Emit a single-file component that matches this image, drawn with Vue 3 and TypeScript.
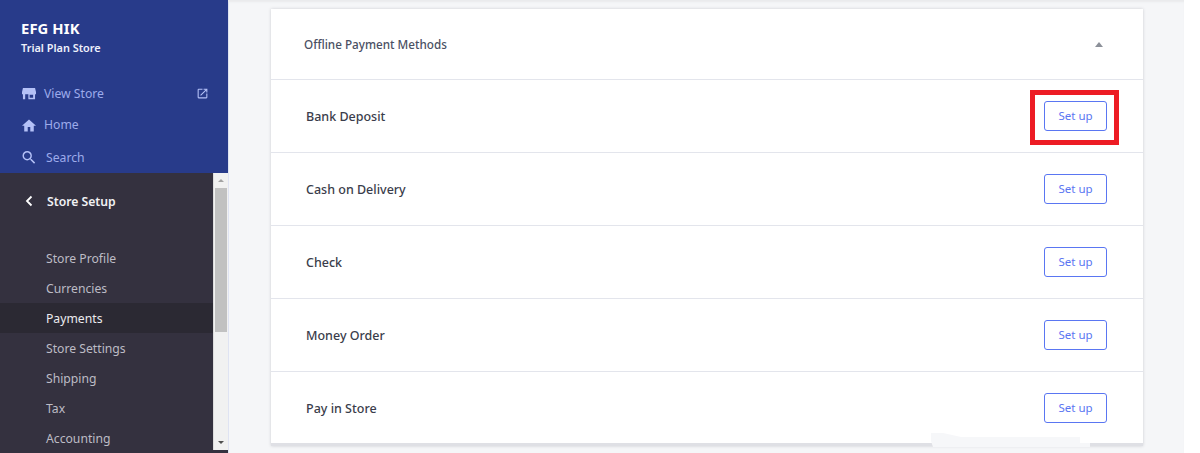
<template>
  <div class="page">
    <aside class="sidebar">
      <div class="brand">
        <div class="store-name">EFG HIK</div>
        <div class="store-plan">Trial Plan Store</div>
      </div>
      <nav class="top-nav">
        <a class="top-link view-store">
          <svg class="icon" viewBox="1 3 22 18"><path d="M2.500 3.500h19l1.500 6v3.500h-1.500v8h-10.500v-8H6v8H2.500v-8H1V9.500z M13 14v4.500h5.500V14z" fill-rule="evenodd" /></svg>
          <span>View Store</span>
          <svg class="external" viewBox="0 0 24 24"><path d="M19 19H5V5h7V3H5a2 2 0 0 0-2 2v14a2 2 0 0 0 2 2h14a2 2 0 0 0 2-2v-7h-2v7zM14 3v2h3.590l-9.830 9.830 1.410 1.410L19 6.410V10h2V3h-7z" /></svg>
        </a>
        <a class="top-link home">
          <svg class="icon" viewBox="1 2 22 19"><path d="M10 21v-7h4v7h5.500v-9H23L12 2 1 12h3.500v9z" /></svg>
          <span>Home</span>
        </a>
        <a class="top-link search">
          <svg class="icon" viewBox="3 3 18 18"><path d="M15.500 14h-.79l-.28-.27A6.470 6.470 0 0 0 16 9.500 6.500 6.500 0 1 0 9.500 16c1.610 0 3.090-.59 4.230-1.570l.27.28v.79l5 4.990L20.490 19l-4.990-5zm-6 0C7.010 14 5 11.990 5 9.500S7.010 5 9.500 5 14 7.010 14 9.500 11.990 14 9.500 14z" /></svg>
          <span>Search</span>
        </a>
      </nav>
      <div class="setup">
        <div class="setup-scroll">
          <div class="setup-title">
            <svg class="back" viewBox="0 0 8 12"><path d="M6.500 1.500 2 6l4.500 4.500" /></svg>
            <span>Store Setup</span>
          </div>
          <ul class="setup-list">
            <li v-for="item in setupItems" :key="item" :class="{ active: item === 'Payments' }">{{ item }}</li>
          </ul>
        </div>
        <div class="scrollbar">
          <div class="arrow up"></div>
          <div class="thumb"></div>
          <div class="arrow down"></div>
        </div>
      </div>
    </aside>

    <main class="content">
      <section class="card">
        <header class="card-head">
          <h2>Offline Payment Methods</h2>
          <span class="caret"></span>
        </header>
        <div v-for="method in methods" :key="method" class="method">
          <span class="method-name">{{ method }}</span>
          <button class="setup-btn" type="button">Set up</button>
        </div>
      </section>
      <div class="red-box"></div>
      <div class="smudge"></div>
    </main>
  </div>
</template>

<script setup lang="ts">
const setupItems: string[] = [
  'Store Profile',
  'Currencies',
  'Payments',
  'Store Settings',
  'Shipping',
  'Tax',
  'Accounting',
]

const methods: string[] = ['Bank Deposit', 'Cash on Delivery', 'Check', 'Money Order', 'Pay in Store']
</script>

<style>
html,
body {
  margin: 0;
  background: #fff;
  overflow: hidden;
}
</style>

<style scoped>
.page {
  display: flex;
  width: 1184px;
  height: 453px;
  font-family: "Noto Sans", "Open Sans", sans-serif;
  overflow: hidden;
}

/* Sidebar */
.sidebar {
  width: 228px;
  flex: none;
  display: flex;
  flex-direction: column;
  background: #34313f;
}

.brand {
  height: 77px;
  padding: 20px 0 0 21px;
  box-sizing: border-box;
  background: #283b8a;
  color: #fff;
}

.store-name {
  font-size: 14.800px;
  line-height: 17px;
  font-weight: 700;
  letter-spacing: 0.1px;
}

.store-plan {
  margin-top: 4px;
  font-size: 10.900px;
  line-height: 14px;
  font-weight: 600;
  color: #eef0fb;
}

.top-nav {
  height: 96px;
  padding-left: 22px;
  padding-right: 19px;
  box-sizing: border-box;
  background: #283b8a;
  color: #9dabeb;
  font-size: 12.200px;
}

.top-link {
  display: flex;
  align-items: center;
  height: 32px;
  gap: 8px;
}

.home span {
  margin-top: -2px;
}

.icon {
  width: 14px;
  height: 13px;
  fill: #b4c1f7;
  flex: none;
}

.search {
  gap: 10px;
}

.external {
  width: 13px;
  height: 13px;
  fill: #b4c1f7;
  margin-left: auto;
}

.setup {
  flex: 1;
  display: flex;
  min-height: 0;
  margin-bottom: 3px;
}

.setup-scroll {
  flex: 1;
  min-width: 0;
}

.setup-title {
  display: flex;
  align-items: center;
  height: 56px;
  padding-left: 25px;
  gap: 14px;
  color: #f1f1f4;
  font-size: 12.200px;
  font-weight: 600;
}

.back {
  width: 8px;
  height: 12px;
  fill: none;
  stroke: #fff;
  stroke-width: 1.800;
}

.setup-list {
  list-style: none;
  margin: 14px 0 0;
  padding: 0;
}

.setup-list li {
  height: 30px;
  line-height: 31.500px;
  padding-left: 46px;
  font-size: 12.200px;
  color: #bdbcc5;
}

.setup-list li.active {
  background: #2b2933;
  color: #ebebef;
}

.scrollbar {
  width: 15px;
  flex: none;
  display: flex;
  flex-direction: column;
  background: #f1f1f1;
  border-left: 1px solid #ddd;
  box-sizing: border-box;
}

.arrow {
  height: 15px;
  flex: none;
  display: flex;
  align-items: center;
  justify-content: center;
}

.arrow::before {
  content: "";
  border-left: 3px solid transparent;
  border-right: 3px solid transparent;
}

.arrow.up::before {
  border-bottom: 3px solid #a3a3a3;
}

.arrow.down::before {
  border-top: 3px solid #505050;
}

.thumb {
  height: 144px;
  margin: 0 1px;
  background: #c1c1c1;
}

.arrow.down {
  margin-top: auto;
}

/* Main */
.content {
  position: relative;
  flex: 1;
  min-width: 0;
  background: #f5f6f8;
  padding: 9px 41px 0 43px;
  box-sizing: border-box;
  box-shadow: inset 0 3px 2px -1px #e9eaec, inset 1px 0 0 #dfe3f3;
}

.card {
  background: #fff;
  box-shadow: 0 0 3px rgba(49, 52, 64, 0.2);
  height: 437px;
  box-sizing: border-box;
  border-bottom: 3px solid #dfe0e5;
  overflow: hidden;
}

.card-head {
  display: flex;
  align-items: center;
  justify-content: space-between;
  height: 70px;
  padding: 0 40px 0 33px;
  border-bottom: 1px solid #e3e5ec;
}

.card-head h2 {
  margin: 0 0 1px;
  font-size: 11.700px;
  font-weight: 500;
  color: #4a5063;
}

.caret {
  width: 0;
  height: 0;
  border-left: 4.500px solid transparent;
  border-right: 4.500px solid transparent;
  border-bottom: 5px solid #8c9099;
}

.method {
  display: flex;
  align-items: center;
  justify-content: space-between;
  height: 72px;
  padding: 0 36px 0 35px;
  border-bottom: 1px solid #e3e5ec;
}

.method:last-child {
  border-bottom: 0;
}

.method-name {
  font-size: 12.500px;
  font-weight: 500;
  color: #3a3d4b;
}

.setup-btn {
  width: 63px;
  height: 30px;
  padding: 0 0 2px;
  background: #fff;
  border: 1px solid #5a76f2;
  border-radius: 3px;
  color: #5a76f2;
  font-family: inherit;
  font-size: 11.500px;
}

.red-box {
  position: absolute;
  left: 802px;
  top: 90px;
  width: 89px;
  height: 55px;
  box-sizing: border-box;
  border: 5px solid #ed1c24;
}

.smudge {
  position: absolute;
  left: 703px;
  top: 433px;
  width: 159px;
  height: 14px;
  background: #f6f7f9;
  clip-path: polygon(0 0, 12px 0, 30px 4px, 149px 4px, 149px 10px, 159px 10px, 159px 14px, 2px 14px, 0 8px);
}
</style>
